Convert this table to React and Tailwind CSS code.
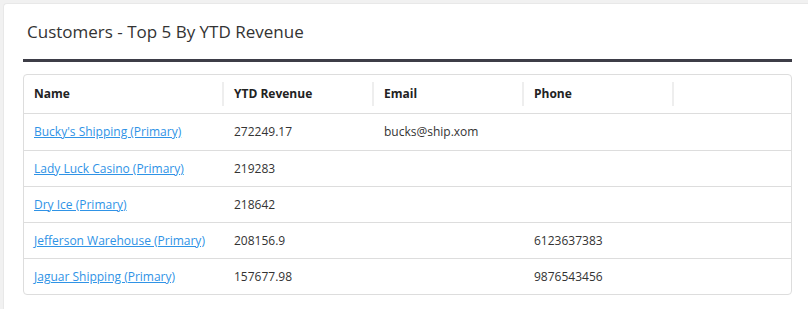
import React from "react";

const rows = [
  { name: "Bucky's Shipping (Primary)", rev: "272249.17", email: "bucks@ship.xom", phone: "" },
  { name: "Lady Luck Casino (Primary)", rev: "219283", email: "", phone: "" },
  { name: "Dry Ice (Primary)", rev: "218642", email: "", phone: "" },
  { name: "Jefferson Warehouse (Primary)", rev: "208156.9", email: "", phone: "6123637383" },
  { name: "Jaguar Shipping (Primary)", rev: "157677.98", email: "", phone: "9876543456" },
];

const headers = ["Name", "YTD Revenue", "Email", "Phone", ""];

export default function App() {
  return (
    <div
      className="w-[808px] h-[309px] overflow-hidden bg-[#f1f1f1] pt-[3px] pl-[3px]"
      style={{ fontFamily: '"Open Sans", "Noto Sans", sans-serif' }}
    >
      <div className="h-[320px] bg-white rounded-tl-[4px] border-l border-t border-[#e8e8e8] pl-[19px] pr-[16px] pt-[16px]">
        <div className="pl-[4px] text-[17px] leading-[24px] text-[#333]">
          Customers - Top 5 By YTD Revenue
        </div>
        <div className="mt-[15px] h-[3px] bg-[#3d3d47]" />
        <div className="mt-[12px] border border-[#dddddd] rounded-[4px] text-[12px] text-[#333]">
          <div className="grid grid-cols-[200px_150px_150px_150px_1fr] h-[39px] border-b border-[#dddddd]">
            {headers.map((h, i) => (
              <div key={i} className="flex items-center justify-between pl-[10px]">
                <span className="font-bold text-[#222]">{h}</span>
                {i < 4 && <div className="w-[2px] h-[24px] bg-[#eeeeee]" />}
              </div>
            ))}
          </div>
          {rows.map((r, i) => (
            <div
              key={i}
              className={`grid grid-cols-[200px_150px_150px_150px_1fr] items-center ${
                i === 0 ? "h-[37px]" : i === rows.length - 1 ? "h-[35px]" : "h-[36px]"
              } ${i < rows.length - 1 ? "border-b border-[#dddddd]" : ""}`}
            >
              <div className="pl-[10px]">
                <a href="#" className="text-[#2f93e6] underline">
                  {r.name}
                </a>
              </div>
              <div className="pl-[10px]">{r.rev}</div>
              <div className="pl-[10px]">{r.email}</div>
              <div className="pl-[10px]">{r.phone}</div>
              <div />
            </div>
          ))}
        </div>
      </div>
    </div>
  );
}
